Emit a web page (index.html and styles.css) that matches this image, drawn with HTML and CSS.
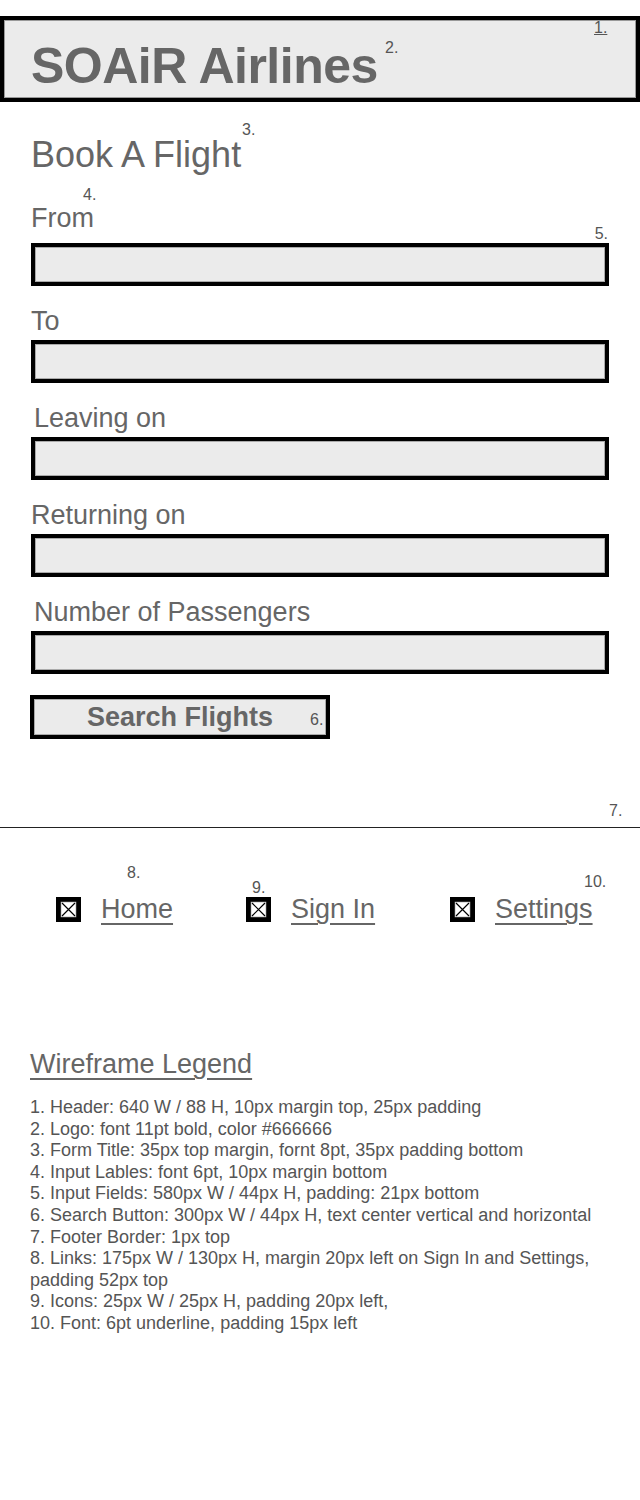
FILE: index.html
```html
<!DOCTYPE html>
<html lang="en">
<head>
    <meta charset="UTF-8">
    <title>SOAiR Airlines - Book A Flight</title>
    <link rel="stylesheet" href="styles.css">
</head>
<body>

    <header class="site-header">
        <h1 class="logo">SOAiR Airlines</h1>
        <span class="note note-1">1.</span>
        <span class="note note-2">2.</span>
    </header>

    <form class="booking" onsubmit="return false;">
        <h2 class="form-title">Book A Flight<span class="note note-3">3.</span></h2>

        <div class="field field-first">
            <label for="from">From<span class="note note-4">4.</span></label>
            <input type="text" id="from">
            <span class="note note-5">5.</span>
        </div>
        <div class="field">
            <label for="to">To</label>
            <input type="text" id="to">
        </div>
        <div class="field">
            <label for="leaving" class="nudge">Leaving on</label>
            <input type="text" id="leaving">
        </div>
        <div class="field">
            <label for="returning">Returning on</label>
            <input type="text" id="returning">
        </div>
        <div class="field">
            <label for="passengers" class="nudge">Number of Passengers</label>
            <input type="text" id="passengers">
        </div>

        <button type="submit" class="search-btn">Search Flights<span class="note note-6">6.</span></button>
    </form>

    <footer class="site-footer">
        <span class="note note-7">7.</span>
        <span class="note note-8">8.</span>
        <span class="note note-9">9.</span>
        <span class="note note-10">10.</span>

        <nav class="links">
            <a href="#" class="link">
                <svg class="icon" width="25" height="25" viewBox="0 0 25 25"><rect width="25" height="25" fill="#000"/><rect x="5" y="5" width="15" height="15" fill="#fff" stroke="#999" stroke-width="0.6"/><path d="M6 6L19 19M19 6L6 19" stroke="#000" stroke-width="1.2"/></svg>
                <span>Home</span>
            </a>
            <a href="#" class="link">
                <svg class="icon" width="25" height="25" viewBox="0 0 25 25"><rect width="25" height="25" fill="#000"/><rect x="5" y="5" width="15" height="15" fill="#fff" stroke="#999" stroke-width="0.6"/><path d="M6 6L19 19M19 6L6 19" stroke="#000" stroke-width="1.2"/></svg>
                <span>Sign In</span>
            </a>
            <a href="#" class="link">
                <svg class="icon" width="25" height="25" viewBox="0 0 25 25"><rect width="25" height="25" fill="#000"/><rect x="5" y="5" width="15" height="15" fill="#fff" stroke="#999" stroke-width="0.6"/><path d="M6 6L19 19M19 6L6 19" stroke="#000" stroke-width="1.2"/></svg>
                <span>Settings</span>
            </a>
        </nav>

        <section class="legend">
            <h2 class="legend-title">Wireframe Legend</h2>
            <p>1. Header: 640 W / 88 H, 10px margin top, 25px padding</p>
            <p>2. Logo: font 11pt bold, color #666666</p>
            <p>3. Form Title: 35px top margin, fornt 8pt, 35px padding bottom</p>
            <p>4. Input Lables: font 6pt, 10px margin bottom</p>
            <p>5. Input Fields: 580px W / 44px H, padding: 21px bottom</p>
            <p>6. Search Button: 300px W / 44px H, text center vertical and horizontal</p>
            <p>7. Footer Border: 1px top</p>
            <p>8. Links: 175px W / 130px H, margin 20px left on Sign In and Settings, padding 52px top</p>
            <p>9. Icons: 25px W / 25px H, padding 20px left,</p>
            <p>10. Font: 6pt underline, padding 15px left</p>
        </section>
    </footer>

</body>
</html>
```

FILE: styles.css
```css
body {
    margin: 0;
    font-family: 'Liberation Sans', Arial, sans-serif;
    color: #666;
    background: #fff;
}

/* little numbered markers from the wireframe */
.note {
    position: absolute;
    font-size: 16px;
    line-height: 16px;
    font-weight: normal;
    color: #555;
    letter-spacing: 0;
}

.site-header {
    position: relative;
    margin-top: 16px;
    height: 86px;
    box-sizing: border-box;
    border: 4px solid #000;
    box-shadow: inset 0 0 0 1px #999;
    background: #ebebeb;
    padding: 19px 0 0 27px;
}
.logo {
    margin: 0;
    font-size: 50px;
    line-height: 54px;
    font-weight: bold;
    letter-spacing: -0.5px;
    color: #666;
}
.note-1 {
    top: 0;
    left: 590px;
    text-decoration: underline;
}
.note-2 {
    top: 20px;
    left: 381px;
}

.booking {
    padding: 0 31px 86px;
}
.form-title {
    position: relative;
    margin: 33px 0 31px;
    font-size: 36px;
    line-height: 40px;
    font-weight: normal;
}
.note-3 {
    top: -13px;
    left: 211px;
}

.field {
    position: relative;
    margin-bottom: 23px;
}
.field label {
    position: relative;
    display: block;
    font-size: 27px;
    line-height: 24px;
    margin-bottom: 7px;
}
.field-first label {
    margin-bottom: 13px;
}
.field label.nudge {
    padding-left: 3px;
}
.note-4 {
    top: -19px;
    left: 52px;
}
.note-5 {
    top: 20px;
    right: 1px;
}
.field input {
    display: block;
    width: 100%;
    height: 43px;
    box-sizing: border-box;
    border: 4px solid #000;
    box-shadow: inset 0 0 0 1px #aaa;
    background: #ebebeb;
    margin: 0;
    padding: 0 8px;
    font-family: inherit;
    font-size: 18px;
    outline: none;
}

.search-btn {
    position: relative;
    display: block;
    width: 300px;
    height: 44px;
    box-sizing: border-box;
    margin: -2px 0 0 -1px;
    border: 4px solid #000;
    box-shadow: inset 0 0 0 1px #aaa;
    background: #ebebeb;
    color: #666;
    font-family: inherit;
    font-size: 27px;
    font-weight: bold;
    padding: 0;
    cursor: pointer;
}
.note-6 {
    top: 13px;
    left: 276px;
}

.site-footer {
    position: relative;
    margin-top: 2px;
    border-top: 1px solid #222;
}
.note-7 {
    top: -25px;
    left: 609px;
}
.note-8 {
    top: 37px;
    left: 127px;
}
.note-9 {
    top: 52px;
    left: 252px;
}
.note-10 {
    top: 46px;
    left: 584px;
}

.links {
    display: grid;
    grid-template-columns: 190px 204px 1fr;
    padding: 66px 0 0 36px;
}
.link {
    display: flex;
    align-items: center;
    gap: 20px;
    padding-left: 20px;
    height: 30px;
    color: #666;
    font-size: 27px;
    line-height: 30px;
    text-decoration: none;
}
.link span {
    text-decoration: underline;
    text-decoration-thickness: 2px;
    text-underline-offset: 5px;
}
.icon {
    flex: none;
    display: block;
}

.legend {
    margin-top: 125px;
    padding: 0 31px 0 30px;
    color: #555;
}
.legend-title {
    margin: 0 0 18px;
    font-size: 27px;
    line-height: 30px;
    font-weight: normal;
    color: #666;
    text-decoration: underline;
    text-decoration-thickness: 2px;
    text-underline-offset: 5px;
}
.legend p {
    margin: 0;
    font-size: 18px;
    line-height: 21.6px;
}
```
